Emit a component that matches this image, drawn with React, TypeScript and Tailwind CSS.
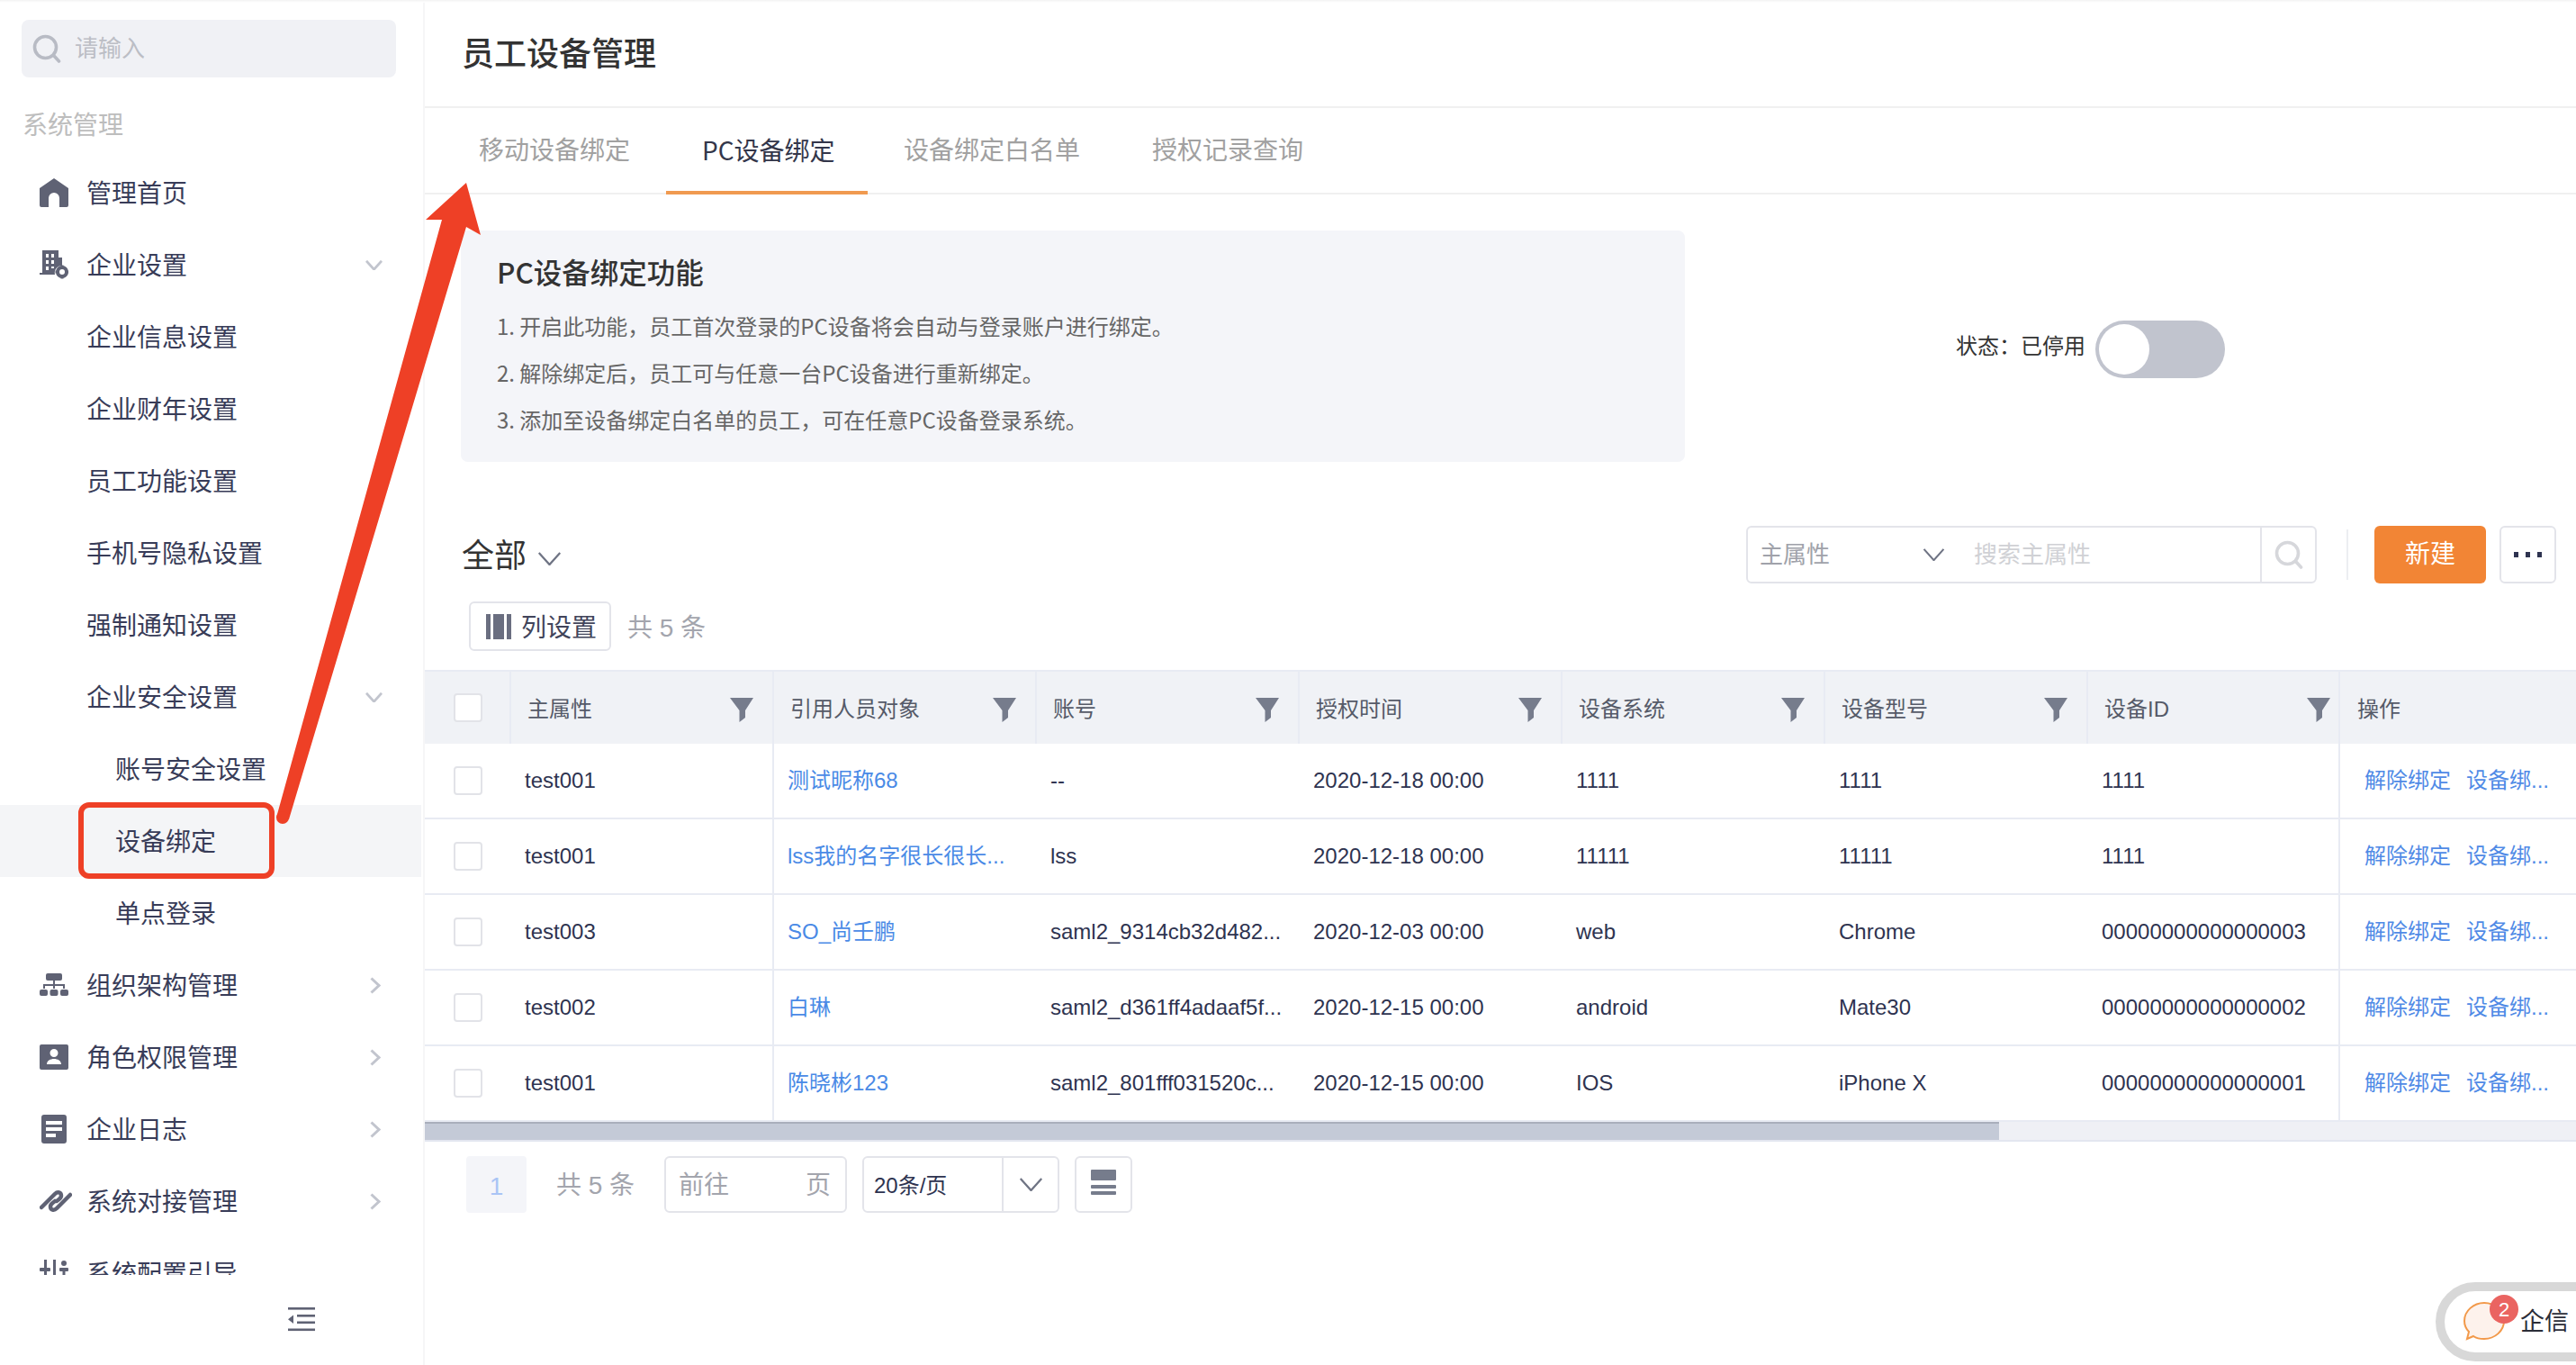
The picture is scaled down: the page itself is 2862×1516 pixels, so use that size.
import React from "react";
import { twJoin } from "tailwind-merge";

const font = "font-['Liberation_Sans','Noto_Sans_CJK_SC',sans-serif]";
const cjkFont = "font-['Noto_Sans_CJK_SC',sans-serif]";

const SearchIcon = ({ className, sw = 3 }: { className?: string; sw?: number }) => (
  <svg className={className} viewBox="0 0 32 32" fill="none" stroke="currentColor" strokeWidth={sw} strokeLinecap="round">
    <circle cx="14.5" cy="14.5" r="12" />
    <path d="M23.5 23.5L29.5 30" />
  </svg>
);

const Chevron = ({ className, sw = 2.4 }: { className?: string; sw?: number }) => (
  <svg className={className} viewBox="0 0 28 16" fill="none" stroke="currentColor" strokeWidth={sw}>
    <path d="M1.5 1L14 15L26.5 1" />
  </svg>
);

const HomeIcon = () => (
  <svg className="h-8 w-8" viewBox="0 0 32 32" fill="#5f6274">
    <path d="M16 0L32 11V30a2 2 0 0 1-2 2H22V22a6 6 0 0 0-12 0V32H2a2 2 0 0 1-2-2V11Z" />
  </svg>
);

const BuildingIcon = () => (
  <svg className="h-8 w-8" viewBox="0 0 32 32" fill="#5f6274">
    <path fillRule="evenodd" d="M3 0H21V8H25V17A8 8 0 0 0 17 27H0V25H3ZM7 4V8H10V4ZM13 4V8H16V4ZM7 11V15H10V11ZM13 11V15H16V11ZM7 18V22H10V18ZM13 18V20H16V18Z" />
    <circle cx="25" cy="24" r="5" fill="none" stroke="#5f6274" strokeWidth="4" />
    <path d="M23.5 16.5h3V20h-3ZM23.5 28h3v3.5h-3ZM17.5 22.5H21v3h-3.5ZM29 22.5h3v3h-3Z" />
  </svg>
);

const OrgIcon = () => (
  <svg className="h-8 w-8" viewBox="0 0 32 32" fill="#5f6274">
    <rect x="7" y="3" width="18" height="8" rx="2" />
    <path d="M15 11h2v4h11v5h-2v-3H17v3h-2v-3H6v3H4v-5h11Z" />
    <rect x="0" y="21" width="9" height="7" rx="2" />
    <rect x="11.5" y="21" width="9" height="7" rx="2" />
    <rect x="23" y="21" width="9" height="7" rx="2" />
  </svg>
);

const RoleIcon = () => (
  <svg className="h-8 w-8" viewBox="0 0 32 32" fill="#5f6274">
    <path fillRule="evenodd" d="M2 2H30a2 2 0 0 1 2 2V28a2 2 0 0 1-2 2H2a2 2 0 0 1-2-2V4a2 2 0 0 1 2-2ZM16 7a4.5 4.5 0 1 0 0 9a4.5 4.5 0 0 0 0-9ZM8 24H24C24 20 20 18 16 18S8 20 8 24Z" />
  </svg>
);

const LogIcon = () => (
  <svg className="h-8 w-8" viewBox="0 0 32 32" fill="#5f6274">
    <path fillRule="evenodd" d="M5 0H27a3 3 0 0 1 3 3V29a3 3 0 0 1-3 3H5a3 3 0 0 1-3-3V3a3 3 0 0 1 3-3ZM7 7V11H25V7ZM7 14V18H25V14ZM7 21V25H18V21Z" />
  </svg>
);

const LinkIcon = () => (
  <svg className="h-8 w-9" viewBox="0 0 36 32" fill="none" stroke="#5f6274" strokeWidth="4.5" strokeLinecap="round" strokeLinejoin="round">
    <path d="M2 23L17 8C20 5 24 6 24 10C24 13 21 14 19 16" />
    <path d="M34 9L19 24C16 27 12 26 12 22C12 19 15 18 17 16" />
  </svg>
);

const SlidersIcon = () => (
  <svg className="h-8 w-8" viewBox="0 0 32 32" fill="#5f6274">
    <rect x="5" y="1" width="3" height="9" />
    <rect x="0" y="10" width="12" height="4" rx="1" />
    <rect x="5" y="14" width="3" height="16" />
    <rect x="15" y="1" width="3" height="29" />
    <rect x="22" y="10" width="10" height="4" rx="1" />
    <circle cx="27" cy="5" r="3" />
    <rect x="25.5" y="14" width="3" height="16" />
  </svg>
);

type MenuItem = {
  label: string;
  level: number;
  icon?: React.ReactNode;
  arrow?: "down" | "right";
  active?: boolean;
};

const menu: MenuItem[] = [
  { label: "管理首页", level: 0, icon: <HomeIcon /> },
  { label: "企业设置", level: 0, icon: <BuildingIcon />, arrow: "down" },
  { label: "企业信息设置", level: 1 },
  { label: "企业财年设置", level: 1 },
  { label: "员工功能设置", level: 1 },
  { label: "手机号隐私设置", level: 1 },
  { label: "强制通知设置", level: 1 },
  { label: "企业安全设置", level: 1, arrow: "down" },
  { label: "账号安全设置", level: 2 },
  { label: "设备绑定", level: 2, active: true },
  { label: "单点登录", level: 2 },
  { label: "组织架构管理", level: 0, icon: <OrgIcon />, arrow: "right" },
  { label: "角色权限管理", level: 0, icon: <RoleIcon />, arrow: "right" },
  { label: "企业日志", level: 0, icon: <LogIcon />, arrow: "right" },
  { label: "系统对接管理", level: 0, icon: <LinkIcon />, arrow: "right" },
  { label: "系统配置引导", level: 0, icon: <SlidersIcon /> },
];

function Sidebar() {
  return (
    <aside className="flex h-[1516px] w-[472px] shrink-0 flex-col border-r-2 border-[#f6f6f7] bg-white pt-[22px]">
      <div className="ml-6 flex h-16 w-[416px] items-center rounded-lg bg-[#f0f1f5] pl-3 text-[26px] text-[#bcbec5]">
        <SearchIcon className="h-8 w-8 text-[#b8bbc4]" sw={3.6} />
        <span className="ml-[15px]">请输入</span>
      </div>
      <div className="mt-[34px] ml-[25px] h-[38px] text-[28px] leading-10 text-[#bdbdbd]">系统管理</div>
      <nav className="mt-4 h-[1242px] overflow-hidden">
        {menu.map((item) => (
          <div
            key={item.label}
            className={twJoin(
              "flex h-20 w-[468px] items-center text-[28px] text-[#383c58]",
              item.active && "bg-[#f4f5f7]",
            )}
          >
            <div className={twJoin("flex items-center", item.level === 2 ? "pl-[128px]" : "pl-[44px]")}>
              {item.level === 0 && <span className="flex w-[52px] items-center">{item.icon}</span>}
              {item.level === 1 && <span className="w-[52px]" />}
              <span className="pt-1">{item.label}</span>
            </div>
            {item.arrow === "down" && <Chevron className="mr-[43px] ml-auto h-[11px] w-[19px] text-[#c2c5ce]" sw={4} />}
            {item.arrow === "right" && (
              <svg className="mr-[45px] ml-auto h-[19px] w-3 text-[#c2c5ce]" viewBox="0 0 12 19" fill="none" stroke="currentColor" strokeWidth="3">
                <path d="M1.5 1.5L10 9.5L1.5 17.5" />
              </svg>
            )}
          </div>
        ))}
      </nav>
      <div className="mt-[34px] ml-[320px]">
        <svg className="h-[30px] w-[30px] text-[#5f6274]" viewBox="0 0 30 30" fill="currentColor">
          <rect x="0" y="2" width="30" height="2.6" />
          <rect x="10" y="10" width="20" height="2.6" />
          <rect x="10" y="17.5" width="20" height="2.6" />
          <rect x="0" y="25.5" width="30" height="2.6" />
          <path d="M6 10.5V20L0 15.2Z" />
        </svg>
      </div>
    </aside>
  );
}

const tabs = ["移动设备绑定", "PC设备绑定", "设备绑定白名单", "授权记录查询"];
const tips = [
  "1. 开启此功能，员工首次登录的PC设备将会自动与登录账户进行绑定。",
  "2. 解除绑定后，员工可与任意一台PC设备进行重新绑定。",
  "3. 添加至设备绑定白名单的员工，可在任意PC设备登录系统。",
];

const headers = ["主属性", "引用人员对象", "账号", "授权时间", "设备系统", "设备型号", "设备ID"];

const rows = [
  ["test001", "测试昵称68", "--", "2020-12-18 00:00", "1111", "1111", "1111"],
  ["test001", "lss我的名字很长很长...", "lss", "2020-12-18 00:00", "11111", "11111", "1111"],
  ["test003", "SO_尚壬鹏", "saml2_9314cb32d482...", "2020-12-03 00:00", "web", "Chrome", "00000000000000003"],
  ["test002", "白琳", "saml2_d361ff4adaaf5f...", "2020-12-15 00:00", "android", "Mate30", "00000000000000002"],
  ["test001", "陈晓彬123", "saml2_801fff031520c...", "2020-12-15 00:00", "IOS", "iPhone X", "00000000000000001"],
];

const Funnel = ({ className }: { className?: string }) => (
  <svg className={twJoin("ml-auto h-[27px] w-[26px] shrink-0", className)} viewBox="0 0 26 27" fill="#767c8c">
    <path d="M0 0H26L17 14V22L10.5 27V14Z" />
  </svg>
);

const Checkbox = () => <div className="h-8 w-8 rounded border-2 border-[#e2e3e8] bg-white" />;

function DeviceTable() {
  return (
    <div className="mt-[21px] w-[2390px] overflow-hidden">
      <div className="flex h-[82px] items-stretch border-t-2 border-[#e8ebf3] bg-[#f0f2f6] text-[24px] text-[#555a68]">
        <div className="flex w-[96px] shrink-0 items-center border-r-2 border-[#e8ebf3] pl-8">
          <Checkbox />
        </div>
        {headers.map((h, i) => (
          <div
            key={h}
            className={twJoin(
              "flex shrink-0 items-center border-r-2 border-[#e8ebf3] pt-1 pl-[18px]",
              i === 6 ? "w-[280px]" : "w-[292px]",
            )}
          >
            <span>{h}</span>
            <Funnel className={i === 6 ? "mr-[9px]" : "mr-[21px]"} />
          </div>
        ))}
        <div className="flex flex-1 items-center pt-1 pl-[19px]">操作</div>
      </div>
      {rows.map((r, idx) => (
        <div key={idx} className="flex h-[84px] items-stretch border-b-2 border-[#e8ebf3] bg-white text-[24px] text-[#2e3350]">
          <div className="flex w-[96px] shrink-0 items-center pl-8">
            <Checkbox />
          </div>
          {r.map((c, i) => (
            <div
              key={i}
              className={twJoin(
                "flex shrink-0 items-center whitespace-nowrap pl-[15px]",
                i === 0 && "border-r-2 border-[#e8ebf3]",
                i === 6 ? "w-[280px] border-r-2 border-[#e8ebf3]" : "w-[292px]",
                i === 1 && "text-[#4a8ae6]",
              )}
            >
              {c}
            </div>
          ))}
          <div className="flex flex-1 items-center whitespace-nowrap pl-[27px] text-[#4f8ae6]">
            <span>解除绑定</span>
            <span className="ml-[17px]">设备绑...</span>
          </div>
        </div>
      ))}
      <div className="h-[22px] border-b-2 border-[#e3e6f0] bg-[#eff0f5]">
        <div className="h-5 w-[1749px] border-t-2 border-[#a9aebb] bg-[#c4cad7]" />
      </div>
    </div>
  );
}

function Pagination() {
  return (
    <div className="mt-4 ml-[46px] flex h-[63px] items-stretch text-[28px] text-[#a3a5ad]">
      <div className="flex w-[67px] items-center justify-center rounded bg-[#f4f5f9] pt-1 text-[#a9c4f5]">1</div>
      <div className="ml-[33px] flex w-[87px] items-center justify-between whitespace-nowrap pt-0.5">
        <span>共</span>
        <span>5</span>
        <span>条</span>
      </div>
      <div className="ml-[33px] flex w-[203px] items-center justify-between rounded-md border-2 border-[#e3e4ea] pt-0.5 pr-4 pl-3.5">
        <span>前往</span>
        <span>页</span>
      </div>
      <div className="ml-[17px] flex w-[219px] items-stretch rounded-md border-2 border-[#e3e4ea] text-[24px] text-[#2e3350]">
        <div className="flex w-[155px] items-center border-r-2 border-[#e3e4ea] pt-0.5 pl-[11px]">20条/页</div>
        <div className="flex flex-1 items-center justify-center">
          <Chevron className="h-[15px] w-[27px] text-[#6f7484]" />
        </div>
      </div>
      <div className="ml-[17px] flex w-[64px] items-center justify-center rounded-md border-2 border-[#e3e4ea]">
        <svg className="h-[33px] w-7" viewBox="0 0 28 33" fill="#767c8c">
          <rect x="0" y="0" width="28" height="12" rx="1" />
          <rect x="0" y="17" width="28" height="4" rx="1" />
          <rect x="0" y="24" width="28" height="4" rx="1" />
        </svg>
      </div>
    </div>
  );
}

function Main() {
  return (
    <main className="h-[1516px] w-[2390px] shrink-0 overflow-hidden bg-white">
      <div className="flex h-[120px] items-center border-b-2 border-[#f0f0f0] pt-1 pl-[41px] text-[36px] font-medium text-[#333333]">
        员工设备管理
      </div>

      <div className={twJoin("flex h-24 border-b-2 border-[#f0f0f0] pl-5 text-[28px] text-[#a1a1a1]", cjkFont)}>
        {tabs.map((t, i) => (
          <div
            key={t}
            className={twJoin(
              "flex items-center border-b-4 pl-10 whitespace-nowrap",
              i === 1 ? "-mb-0.5 w-[224px] border-[#f09a50] text-[#33364a]" : "border-transparent pr-10",
            )}
          >
            {t}
          </div>
        ))}
      </div>

      <div className="mt-10 flex items-center">
        <div className={twJoin("ml-10 h-[257px] w-[1360px] rounded-lg bg-[#f4f5f9] pt-6 pl-10", cjkFont)}>
          <div className="h-[38px] pt-0.5 text-[31.5px] leading-[38px] font-medium text-[#333333]">PC设备绑定功能</div>
          <div className="mt-[18px] text-[24px] leading-[52px] text-[#666666]">
            {tips.map((t) => (
              <div key={t}>{t}</div>
            ))}
          </div>
        </div>
        <div className="ml-[301px] flex items-center text-[24px] text-[#333333]">
          <span className="w-[155px]">状态：已停用</span>
          <div className="mt-[7px] flex h-16 w-[144px] items-center rounded-full bg-[#c1c4ce] pl-1">
            <div className="h-14 w-14 rounded-full bg-white" />
          </div>
        </div>
      </div>

      <div className="mt-[71px] flex h-16 items-center pr-[22px] pl-[41px]">
        <span className="pt-1 text-[36px] text-[#333333]">全部</span>
        <Chevron className="mt-2 ml-3 h-[15px] w-[27px] text-[#6f7484]" />
        <div className="ml-auto flex h-16 w-[634px] items-stretch rounded-md border-2 border-[#e3e4ea] text-[26px]">
          <div className="flex w-[249px] items-center pl-[13px] text-[#a0a2aa]">
            <span>主属性</span>
            <Chevron className="mr-[29px] ml-auto h-[14px] w-[27px] text-[#6f7484]" />
          </div>
          <div className="flex w-[322px] items-center border-r-2 border-[#e3e4ea] pl-[2px] text-[#d0d1d5]">搜索主属性</div>
          <div className="flex flex-1 items-center justify-center">
            <SearchIcon className="h-8 w-8 text-[#d6d7db]" sw={3.6} />
          </div>
        </div>
        <div className="mr-[29px] ml-[33px] h-14 w-0.5 bg-[#eceef2]" />
        <div className="flex h-16 w-[124px] items-center justify-center rounded-md bg-[#f28535] text-[28px] text-white">新建</div>
        <div className="ml-[15px] flex h-16 w-[63px] items-center justify-center gap-2 rounded-md border-2 border-[#e3e4ea]">
          <span className="h-1.5 w-[5px] bg-[#2e3350]" />
          <span className="h-1.5 w-[5px] bg-[#2e3350]" />
          <span className="h-1.5 w-[5px] bg-[#2e3350]" />
        </div>
      </div>

      <div className="mt-5 ml-[49px] flex h-[55px] items-center">
        <div className="flex h-[55px] w-[158px] items-center rounded-md border-2 border-[#e3e4ea] pl-[17px] text-[28px] text-[#41445a]">
          <svg className="h-[28px] w-[29px]" viewBox="0 0 29 28" fill="#6a6e80">
            <rect x="0" y="0" width="5" height="28" />
            <rect x="8" y="0" width="12" height="28" />
            <rect x="23" y="0" width="5" height="28" />
          </svg>
          <span className="ml-2.5 pt-1">列设置</span>
        </div>
        <div className="ml-[18px] flex w-[87px] items-center justify-between pt-1 text-[28px] text-[#a3a5ad]">
          <span>共</span>
          <span>5</span>
          <span>条</span>
        </div>
      </div>

      <DeviceTable />
      <Pagination />
    </main>
  );
}

export default function App() {
  return (
    <div className={twJoin("relative flex h-[1516px] w-[2862px] overflow-hidden bg-white", font)}>
      <Sidebar />
      <Main />

      <div className="absolute top-0 left-0 h-[3px] w-full bg-linear-to-b from-[#f3f3f3] to-white" />

      {/* red annotation */}
      <div className="absolute top-[891px] left-[87px] h-[85px] w-[218px] rounded-xl border-[6px] border-[#ee4026]" />
      <svg className="absolute top-0 left-0 h-[1516px] w-[2862px]" viewBox="0 0 2862 1516" fill="#ee4026">
        <polygon points="518,203 534,261 518,252 321,910 307,908 491,244 473,244" />
        <circle cx="314" cy="908" r="7" />
      </svg>

      {/* chat widget */}
      <div className="absolute top-[1424px] left-[2706px] flex h-[88px] w-[170px] items-center rounded-l-[44px] border-[10px] border-[#d8d8d8] bg-white pl-[21px]">
        <svg className="h-[44px] w-[46px]" viewBox="0 0 46 44" fill="#fdf2ec" stroke="#f2994a" strokeWidth="2">
          <path d="M23 1C35 1 45 10 45 21C45 32 35 41 23 41C18 41 14 40 11 38L4 41L6 33C3 30 1 26 1 21C1 10 11 1 23 1Z" />
        </svg>
        <span className="ml-[17px] text-[27px] whitespace-nowrap text-[#2b2d38]">企信</span>
      </div>
      <div className="absolute top-[1438px] left-[2766px] flex h-8 w-8 items-center justify-center rounded-full bg-[#ea6461] text-[22px] text-white">
        2
      </div>
    </div>
  );
}
